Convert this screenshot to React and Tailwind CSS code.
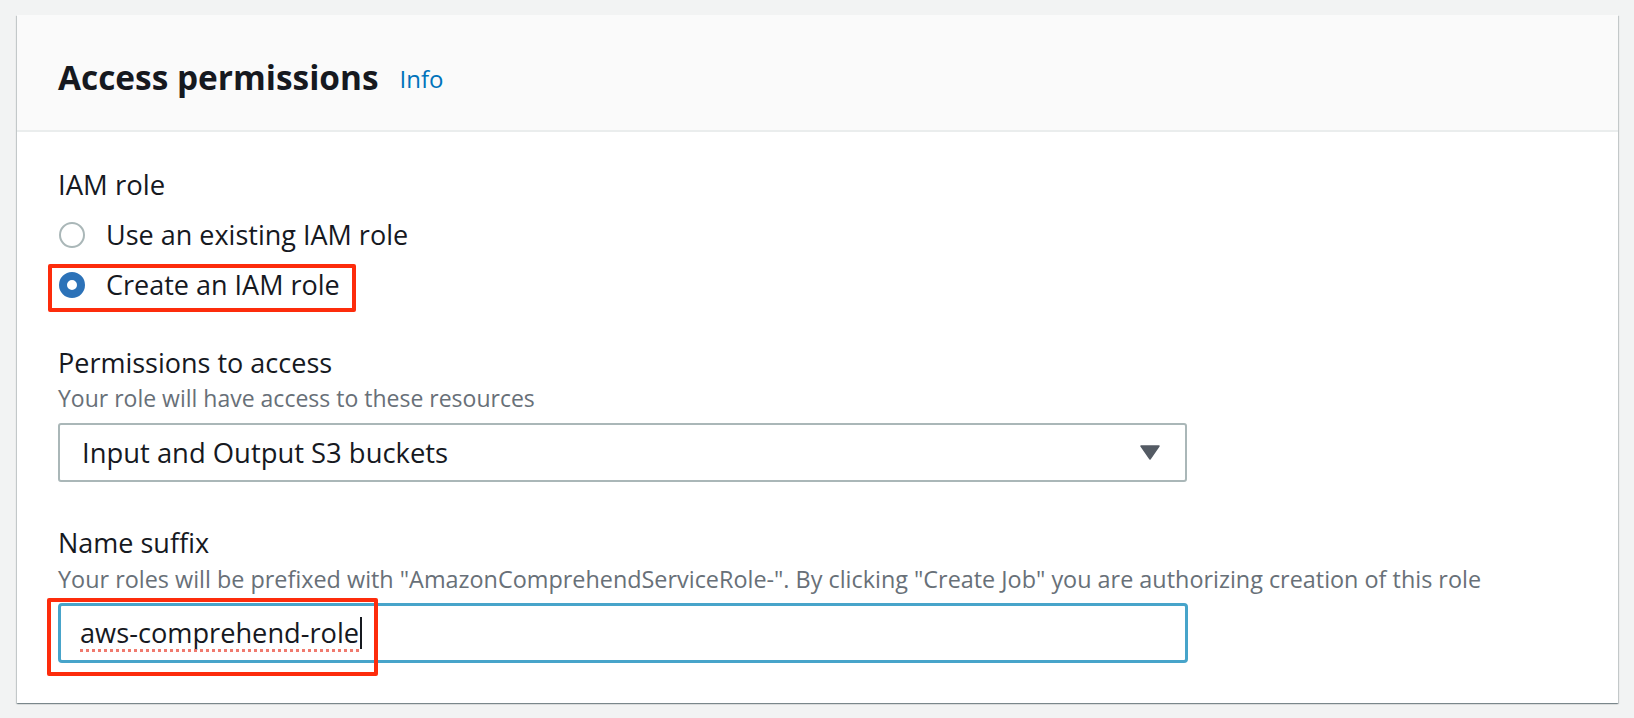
export default function App() {
  const font = { fontFamily: '"Open Sans", "Liberation Sans", Arial, sans-serif' };

  return (
    <div className="min-h-[718px] w-[1634px] bg-[#f2f3f3] pt-[15px] pb-[15px]" style={font}>
      <div className="ml-[17px] mr-[16px] bg-white shadow-[0_1px_1px_0_rgba(0,28,36,0.3),1px_1px_1px_0_rgba(0,28,36,0.15),-1px_1px_1px_0_rgba(0,28,36,0.15)]">
        {/* header */}
        <div className="flex h-[117px] items-center border-b-2 border-[#eaeded] bg-[#fafafa] pl-[41px] pt-[8px]">
          <h2 className="text-[33.4px] font-bold leading-[40px] text-[#16191f]">Access permissions</h2>
          <a className="ml-[21px] mt-[4px] text-[24px] leading-[30px] text-[#0073bb]">Info</a>
        </div>

        {/* body */}
        <div className="pl-[41px] pt-[37px] pb-[40px]">
          <div className="text-[27.5px] leading-[32px] text-[#16191f]">IAM role</div>

          <div className="mt-[9px]">
            <label className="flex h-[50px] items-center">
              <span className="ml-[1px] h-[26px] w-[26px] rounded-full border-2 border-[#aab7b8] bg-white" />
              <span className="ml-[21px] text-[27px] leading-[32px] text-[#16191f]">Use an existing IAM role</span>
            </label>
            <label className="relative flex h-[50px] items-center">
              <span className="ml-[1px] h-[26px] w-[26px] rounded-full border-[8px] border-[#2c72b8] bg-white" />
              <span className="ml-[21px] text-[27px] leading-[32px] text-[#16191f]">Create an IAM role</span>
              <span className="absolute left-[-10px] top-[4px] h-[48px] w-[308px] rounded-[2px] border-4 border-[#fd2c0c]" />
            </label>
          </div>

          <div className="mt-[37px] text-[27px] leading-[32px] text-[#16191f]">Permissions to access</div>
          <div className="mt-[4px] text-[23px] leading-[30px] text-[#687078]">
            Your role will have access to these resources
          </div>
          <div className="mt-[10px] flex h-[59px] w-[1129px] items-center justify-between rounded-[3px] border-2 border-[#aab7b8] bg-white pl-[22px] pr-[25px]">
            <span className="text-[27.4px] leading-[32px] text-[#16191f]">Input and Output S3 buckets</span>
            <svg width="20" height="15" viewBox="0 0 20 15">
              <path d="M1 1 L19 1 L10 14 Z" fill="#545b64" stroke="#545b64" strokeWidth="1.5" strokeLinejoin="round" />
            </svg>
          </div>

          <div className="mt-[45px] text-[27px] leading-[32px] text-[#16191f]">Name suffix</div>
          <div className="mt-[5px] text-[23.4px] leading-[30px] text-[#687078]">
            Your roles will be prefixed with "AmazonComprehendServiceRole-". By clicking "Create Job" you are authorizing creation of this role
          </div>
          <div className="relative mt-[9px] h-[60px] w-[1130px]">
            <div className="flex h-full items-center rounded-[4px] border-[3px] border-[#47a4ca] bg-white pl-[19px]">
              <span className="relative text-[27.2px] leading-[32px] text-[#16191f]">
                aws-comprehend-role
                <span className="absolute bottom-[-3px] left-0 right-0 border-b-[3px] border-dotted border-[#f07a6e]" />
              </span>
              <span className="ml-[1px] h-[32px] w-[2px] bg-[#16191f]" />
            </div>
            <span className="absolute left-[-11px] top-[-5px] h-[78px] w-[331px] rounded-[2px] border-4 border-[#fd2c0c]" />
          </div>
        </div>
      </div>
    </div>
  );
}
